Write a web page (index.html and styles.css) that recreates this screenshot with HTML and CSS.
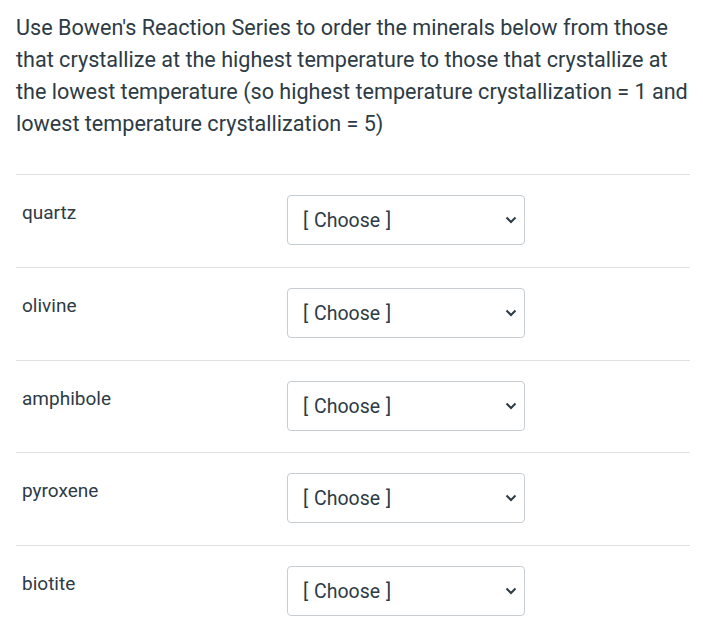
FILE: index.html
```html
<!DOCTYPE html>
<html>
<head>
<meta charset="utf-8">
<link rel="stylesheet" href="styles.css">
</head>
<body>
<div class="page">
  <p class="question">Use Bowen's Reaction Series to order the minerals below from those that crystallize at the highest temperature to those that crystallize at the lowest temperature (so highest temperature crystallization = 1 and lowest temperature crystallization = 5)</p>
  <div class="rows">
    <div class="row">
      <div class="label">quartz</div>
      <div class="select"><span>[ Choose ]</span><svg class="chev" width="12" height="8" viewBox="0 0 12 8"><path d="M1.5 1.5 L6 6 L10.5 1.5" fill="none" stroke="#2d3b45" stroke-width="2"/></svg></div>
    </div>
    <div class="row">
      <div class="label">olivine</div>
      <div class="select"><span>[ Choose ]</span><svg class="chev" width="12" height="8" viewBox="0 0 12 8"><path d="M1.5 1.5 L6 6 L10.5 1.5" fill="none" stroke="#2d3b45" stroke-width="2"/></svg></div>
    </div>
    <div class="row">
      <div class="label">amphibole</div>
      <div class="select"><span>[ Choose ]</span><svg class="chev" width="12" height="8" viewBox="0 0 12 8"><path d="M1.5 1.5 L6 6 L10.5 1.5" fill="none" stroke="#2d3b45" stroke-width="2"/></svg></div>
    </div>
    <div class="row">
      <div class="label">pyroxene</div>
      <div class="select"><span>[ Choose ]</span><svg class="chev" width="12" height="8" viewBox="0 0 12 8"><path d="M1.5 1.5 L6 6 L10.5 1.5" fill="none" stroke="#2d3b45" stroke-width="2"/></svg></div>
    </div>
    <div class="row">
      <div class="label">biotite</div>
      <div class="select"><span>[ Choose ]</span><svg class="chev" width="12" height="8" viewBox="0 0 12 8"><path d="M1.5 1.5 L6 6 L10.5 1.5" fill="none" stroke="#2d3b45" stroke-width="2"/></svg></div>
    </div>
  </div>
</div>
</body>
</html>
```
FILE: styles.css
```css
html, body {
  margin: 0;
  padding: 0;
  background: #ffffff;
}
body {
  font-family: Roboto, "Liberation Sans", sans-serif;
  color: #2d3b45;
}
.page {
  padding: 12px 13px 0 16px;
}
.question {
  margin: 0;
  font-size: 21.6px;
  line-height: 32px;
}
.rows {
  margin-top: 34px;
}
.row {
  display: flex;
  align-items: flex-start;
  border-top: 1px solid #dfe2e4;
  padding: 20px 0 21.75px 6px;
}
.label {
  width: 265px;
  font-size: 19px;
  line-height: 24px;
  padding-top: 6px;
}
.select {
  box-sizing: border-box;
  width: 238px;
  height: 50px;
  border: 1px solid #c7cdd1;
  border-radius: 4px;
  display: flex;
  align-items: center;
  justify-content: space-between;
  padding: 0 7px 0 15px;
  font-size: 19.5px;
}
.select span {
  padding-top: 1px;
  word-spacing: 1px;
}
.chev {
  display: block;
}
```
